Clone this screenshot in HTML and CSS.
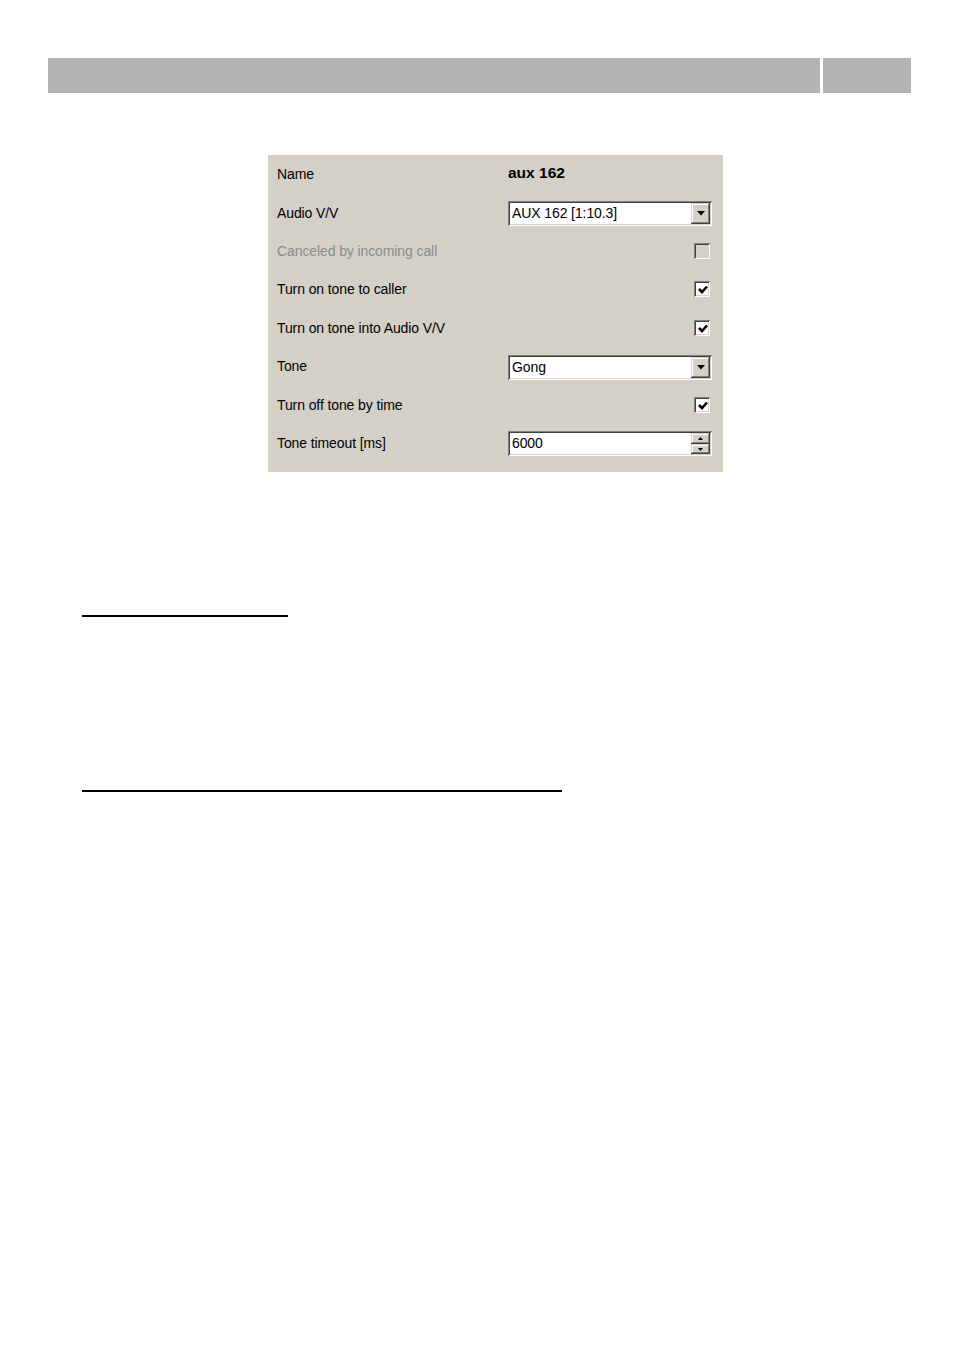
FILE: index.html
```html
<!DOCTYPE html>
<html>
<head>
<meta charset="utf-8">
<link rel="stylesheet" href="styles.css">
</head>
<body>
<div class="header">
  <div class="bar-main"></div>
  <div class="bar-side"></div>
</div>

<div class="panel">
  <div class="row">
    <div class="label">Name</div>
    <div class="ctrl"><span class="name-val">aux 162</span></div>
  </div>
  <div class="row">
    <div class="label">Audio V/V</div>
    <div class="ctrl">
      <div class="combo">
        <span class="combo-text">AUX 162 [1:10.3]</span>
        <span class="btn drop"><svg width="8" height="5" viewBox="0 0 8 5"><polygon points="0,0 8,0 4,4.5" fill="#000"/></svg></span>
      </div>
    </div>
  </div>
  <div class="row">
    <div class="label disabled">Canceled by incoming call</div>
    <div class="ctrl right"><span class="check off"></span></div>
  </div>
  <div class="row">
    <div class="label">Turn on tone to caller</div>
    <div class="ctrl right"><span class="check"><svg width="10" height="9" viewBox="0 0 10 9"><polyline points="1,4 4,7 9,1.5" fill="none" stroke="#000" stroke-width="2.6"/></svg></span></div>
  </div>
  <div class="row">
    <div class="label">Turn on tone into Audio V/V</div>
    <div class="ctrl right"><span class="check"><svg width="10" height="9" viewBox="0 0 10 9"><polyline points="1,4 4,7 9,1.5" fill="none" stroke="#000" stroke-width="2.6"/></svg></span></div>
  </div>
  <div class="row">
    <div class="label">Tone</div>
    <div class="ctrl">
      <div class="combo">
        <span class="combo-text">Gong</span>
        <span class="btn drop"><svg width="8" height="5" viewBox="0 0 8 5"><polygon points="0,0 8,0 4,4.5" fill="#000"/></svg></span>
      </div>
    </div>
  </div>
  <div class="row">
    <div class="label">Turn off tone by time</div>
    <div class="ctrl right"><span class="check"><svg width="10" height="9" viewBox="0 0 10 9"><polyline points="1,4 4,7 9,1.5" fill="none" stroke="#000" stroke-width="2.6"/></svg></span></div>
  </div>
  <div class="row">
    <div class="label">Tone timeout [ms]</div>
    <div class="ctrl">
      <div class="combo">
        <span class="combo-text">6000</span>
        <span class="spin">
          <span class="btn half"><svg width="5" height="3" viewBox="0 0 5 3"><polygon points="0,3 5,3 2.5,0" fill="#000"/></svg></span>
          <span class="btn half"><svg width="5" height="3" viewBox="0 0 5 3"><polygon points="0,0 5,0 2.5,3" fill="#000"/></svg></span>
        </span>
      </div>
    </div>
  </div>
</div>

<div class="rule rule-short"></div>
<div class="rule rule-long"></div>
</body>
</html>
```

FILE: styles.css
```css
html, body {
  margin: 0;
  padding: 0;
  background: #ffffff;
}
body {
  font-family: "Liberation Sans", Arial, sans-serif;
  width: 954px;
  height: 1349px;
  overflow: hidden;
}
.header {
  display: flex;
  gap: 3px;
  margin: 58px 0 0 48px;
  height: 35px;
}
.bar-main {
  width: 772px;
  background: #b3b3b3;
}
.bar-side {
  width: 88px;
  background: #b3b3b3;
}
.panel {
  margin: 62px 0 0 268px;
  width: 455px;
  height: 317px;
  box-sizing: border-box;
  background: #d4d0c8;
  padding: 0 11px 9.8px 9px;
  display: flex;
  flex-direction: column;
}
.row {
  height: 38.4px;
  display: flex;
  align-items: center;
}
.label {
  width: 231px;
  font-size: 14px;
  color: #000;
  letter-spacing: -0.1px;
}
.label.disabled {
  color: #8c8c8c;
}
.ctrl {
  flex: 1;
  display: flex;
  align-items: center;
}
.ctrl.right {
  justify-content: flex-end;
  padding-right: 2px;
}
.name-val {
  font-weight: bold;
  font-size: 15.5px;
  margin-top: -2px;
}
.combo {
  width: 204px;
  height: 25px;
  margin-top: 2px;
  box-sizing: border-box;
  padding: 2px;
  background: #fff;
  box-shadow: inset 1px 1px #808080, inset -1px -1px #ffffff, inset 2px 2px #404040, inset -2px -2px #d4d0c8;
  display: flex;
  align-items: stretch;
}
.combo-text {
  flex: 1;
  font-size: 14px;
  line-height: 21px;
  padding-left: 2px;
  color: #000;
  letter-spacing: -0.1px;
}
.btn {
  background: #d4d0c8;
  box-shadow: inset -1px -1px #404040, inset 1px 1px #d4d0c8, inset -2px -2px #808080, inset 2px 2px #ffffff;
  display: flex;
  align-items: center;
  justify-content: center;
}
.drop {
  width: 19px;
}
.spin {
  width: 19px;
  display: flex;
  flex-direction: column;
}
.half {
  flex: 1;
}
.check {
  width: 16px;
  height: 16px;
  box-sizing: border-box;
  background: #fff;
  box-shadow: inset 1px 1px #808080, inset -1px -1px #ffffff, inset 2px 2px #404040, inset -2px -2px #d4d0c8;
  display: flex;
  align-items: center;
  justify-content: center;
}
.check svg {
  margin: 1px 0 0 1px;
}
.check.off {
  background: #d4d0c8;
}
.rule {
  height: 2px;
  background: #000;
  margin-left: 82px;
}
.rule-short {
  width: 206px;
  margin-top: 143px;
}
.rule-long {
  width: 480px;
  margin-top: 173px;
}
```
